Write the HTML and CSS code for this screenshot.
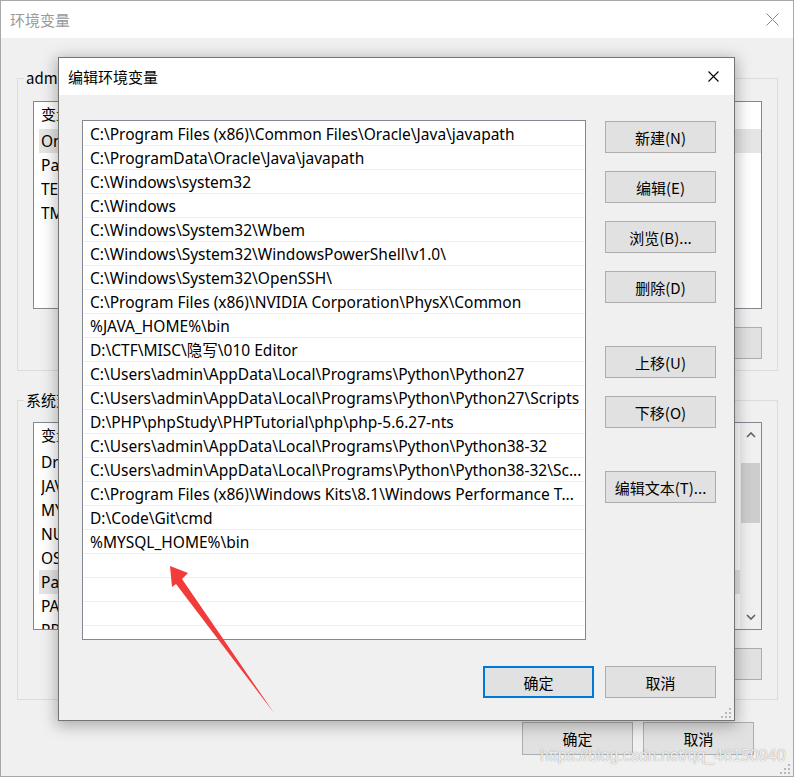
FILE: index.html
```html
<!DOCTYPE html>
<html lang="zh-CN">
<head>
<meta charset="utf-8">
<title>编辑环境变量</title>
<link rel="stylesheet" href="styles.css">
</head>
<body>
<div class="win">
  <div class="win-title">
    <span>环境变量</span>
    <svg class="win-close" viewBox="0 0 13 13"><path d="M0.5 0.5L12.5 12.5M12.5 0.5L0.5 12.5" stroke="#8a8a8a" stroke-width="1" fill="none"/></svg>
  </div>
  <div class="win-body">
    <fieldset class="group g1">
      <legend>admin 的用户变量(U)</legend>
      <div class="vlist">
        <div class="vlist-main">
          <div class="vhead"><span class="c1">变量</span><span class="c2">值</span></div>
          <div class="vrow sel"><span class="c1">OneDrive</span><span class="c2">C:\Users\admin\OneDrive</span></div>
          <div class="vrow"><span class="c1">Path</span><span class="c2">C:\Users\admin\AppData\Local\Microsoft\WindowsApps;</span></div>
          <div class="vrow"><span class="c1">TEMP</span><span class="c2">C:\Users\admin\AppData\Local\Temp</span></div>
          <div class="vrow"><span class="c1">TMP</span><span class="c2">C:\Users\admin\AppData\Local\Temp</span></div>
        </div>
      </div>
      <div class="grp-btns">
        <button class="btn">新建(N)...</button>
        <button class="btn">编辑(E)...</button>
        <button class="btn">删除(D)</button>
      </div>
    </fieldset>
    <fieldset class="group g2">
      <legend>系统变量(S)</legend>
      <div class="vlist">
        <div class="vlist-main">
          <div class="vhead"><span class="c1">变量</span><span class="c2">值</span></div>
          <div class="vrow"><span class="c1">DriverData</span><span class="c2">C:\Windows\System32\Drivers\DriverData</span></div>
          <div class="vrow"><span class="c1">JAVA_HOME</span><span class="c2">C:\Program Files\Java\jdk1.8.0_201</span></div>
          <div class="vrow"><span class="c1">MYSQL_HOME</span><span class="c2">D:\MySQL\mysql-8.0.19-winx64</span></div>
          <div class="vrow"><span class="c1">NUMBER_OF_PROCESSORS</span><span class="c2">8</span></div>
          <div class="vrow"><span class="c1">OS</span><span class="c2">Windows_NT</span></div>
          <div class="vrow sel"><span class="c1">Path</span><span class="c2">C:\Program Files (x86)\Common Files\Oracle\Java\javapath;</span></div>
          <div class="vrow"><span class="c1">PATHEXT</span><span class="c2">.COM;.EXE;.BAT;.CMD;.VBS;.VBE;.JS;.JSE;.WSF;.WSH;.MSC</span></div>
          <div class="vrow"><span class="c1">PROCESSOR_ARCHITECTURE</span><span class="c2">AMD64</span></div>
        </div>
        <div class="vscroll">
          <div class="sb-btn"><svg viewBox="0 0 10 6" class="chev"><path d="M1 5L5 1L9 5" stroke="#606060" stroke-width="1.6" fill="none"/></svg></div>
          <div class="sb-track"><div class="sb-thumb"></div></div>
          <div class="sb-btn"><svg viewBox="0 0 10 6" class="chev"><path d="M1 1L5 5L9 1" stroke="#606060" stroke-width="1.6" fill="none"/></svg></div>
        </div>
      </div>
      <div class="grp-btns">
        <button class="btn">新建(W)...</button>
        <button class="btn">编辑(I)...</button>
        <button class="btn">删除(L)</button>
      </div>
    </fieldset>
    <div class="win-foot">
      <button class="btn btn-foot">确定</button>
      <button class="btn btn-foot">取消</button>
    </div>
  </div>
  <svg class="grip win-grip" viewBox="0 0 10 10"><g fill="#b8b8b8"><rect x="8" y="0" width="2" height="2"/><rect x="4" y="4" width="2" height="2"/><rect x="8" y="4" width="2" height="2"/><rect x="0" y="8" width="2" height="2"/><rect x="4" y="8" width="2" height="2"/><rect x="8" y="8" width="2" height="2"/></g></svg>
</div>

<div class="dlg">
  <div class="dlg-title">
    <span>编辑环境变量</span>
    <svg class="dlg-close" viewBox="0 0 11 11"><path d="M0.5 0.5L10.5 10.5M10.5 0.5L0.5 10.5" stroke="#000" stroke-width="1.1" fill="none"/></svg>
  </div>
  <div class="dlg-body">
    <div class="plist">
      <div class="prow">C:\Program Files (x86)\Common Files\Oracle\Java\javapath</div>
      <div class="prow">C:\ProgramData\Oracle\Java\javapath</div>
      <div class="prow">C:\Windows\system32</div>
      <div class="prow">C:\Windows</div>
      <div class="prow">C:\Windows\System32\Wbem</div>
      <div class="prow">C:\Windows\System32\WindowsPowerShell\v1.0\</div>
      <div class="prow">C:\Windows\System32\OpenSSH\</div>
      <div class="prow">C:\Program Files (x86)\NVIDIA Corporation\PhysX\Common</div>
      <div class="prow">%JAVA_HOME%\bin</div>
      <div class="prow">D:\CTF\MISC\隐写\010 Editor</div>
      <div class="prow">C:\Users\admin\AppData\Local\Programs\Python\Python27</div>
      <div class="prow">C:\Users\admin\AppData\Local\Programs\Python\Python27\Scripts</div>
      <div class="prow">D:\PHP\phpStudy\PHPTutorial\php\php-5.6.27-nts</div>
      <div class="prow">C:\Users\admin\AppData\Local\Programs\Python\Python38-32</div>
      <div class="prow">C:\Users\admin\AppData\Local\Programs\Python\Python38-32\Sc...</div>
      <div class="prow">C:\Program Files (x86)\Windows Kits\8.1\Windows Performance T...</div>
      <div class="prow">D:\Code\Git\cmd</div>
      <div class="prow">%MYSQL_HOME%\bin</div>
      <div class="prow"></div>
      <div class="prow"></div>
      <div class="prow"></div>
      <div class="prow"></div>
      <div class="prow"></div>
    </div>
    <div class="side-btns">
      <button class="btn">新建(N)</button>
      <button class="btn">编辑(E)</button>
      <button class="btn">浏览(B)...</button>
      <button class="btn">删除(D)</button>
      <button class="btn sep">上移(U)</button>
      <button class="btn">下移(O)</button>
      <button class="btn sep">编辑文本(T)...</button>
    </div>
    <div class="dlg-foot">
      <button class="btn btn-default">确定</button>
      <button class="btn">取消</button>
    </div>
  </div>
  <svg class="grip dlg-grip" viewBox="0 0 10 10"><g fill="#b8b8b8"><rect x="8" y="0" width="2" height="2"/><rect x="4" y="4" width="2" height="2"/><rect x="8" y="4" width="2" height="2"/><rect x="0" y="8" width="2" height="2"/><rect x="4" y="8" width="2" height="2"/><rect x="8" y="8" width="2" height="2"/></g></svg>
</div>

<svg class="arrow" viewBox="0 0 794 777" width="794" height="777">
  <polygon points="170,566 188,573 182,579 274,713 176,584 172,587" fill="#f23b3b"/>
</svg>

<div class="watermark">https://blog.csdn.net/qq_46150940</div>
</body>
</html>
```

FILE: styles.css
```css
* { box-sizing: border-box; }

html, body {
  margin: 0;
  padding: 0;
}

body {
  width: 794px;
  height: 777px;
  overflow: hidden;
  position: relative;
  background: #f0f0f0;
  font-family: "Noto Sans", "Noto Sans CJK SC", sans-serif;
  font-size: 15px;
  color: #000;
}

/* ---------- background window ---------- */
.win {
  width: 794px;
  height: 777px;
  border: 1px solid #a8a8a8;
  background: #f0f0f0;
  display: flex;
  flex-direction: column;
  position: relative;
}

.win-title {
  height: 37px;
  flex: none;
  background: #fff;
  display: flex;
  align-items: center;
  justify-content: space-between;
  padding: 0 14px 0 9px;
  color: #9a9a9a;
  font-family: "Noto Sans CJK SC", sans-serif;
}

.win-close { width: 13px; height: 13px; }

.win-body {
  flex: 1;
  padding: 30px 15px 0 16px;
  display: flex;
  flex-direction: column;
}

.group {
  margin: 0;
  border: 1px solid #dcdcdc;
  min-width: 0;
  padding: 13px 15px 11px 15px;
  display: flex;
  flex-direction: column;
}

.group legend {
  padding: 0 2px;
  margin-left: -9px;
  line-height: 20px;
  font-family: "Noto Sans CJK SC", sans-serif;
}

.g2 {
  margin-top: 19px;
  padding-top: 12px;
  padding-bottom: 19px;
}

.vlist {
  height: 208px;
  border: 1px solid #828790;
  background: #fff;
  display: flex;
  overflow: hidden;
}

.vlist-main {
  flex: 1;
  min-width: 0;
  overflow: hidden;
}

.vhead {
  height: 27px;
  line-height: 24px;
  display: flex;
  padding-left: 7px;
  font-family: "Noto Sans CJK SC", sans-serif;
}

.vrow {
  height: 24px;
  line-height: 24px;
  display: flex;
  margin-left: 5px;
  padding-left: 2px;
  white-space: nowrap;
  font-size: 15.5px;
}

.vrow.sel { background: #e5e5e5; }

.c1 { width: 212px; flex: none; overflow: hidden; }
.vhead .c1 { width: 214px; }
.c2 { flex: 1; overflow: hidden; }

.vscroll {
  width: 21px;
  flex: none;
  background: #f0f0f0;
  display: flex;
  flex-direction: column;
  border-left: 1px solid #f0f0f0;
}

.sb-btn {
  height: 24px;
  display: flex;
  align-items: center;
  justify-content: center;
}

.chev { width: 10px; height: 6px; }

.sb-track {
  flex: 1;
  padding-top: 16px;
}

.sb-thumb {
  height: 60px;
  background: #cdcdcd;
  margin-right: 1px;
}

.grp-btns {
  display: flex;
  justify-content: flex-end;
  gap: 12px;
  margin-top: 18px;
}

.btn {
  width: 111px;
  height: 32px;
  padding: 0;
  background: #e1e1e1;
  border: 1px solid #adadad;
  font-family: "Noto Sans CJK SC", sans-serif;
  font-size: 15px;
  color: #000;
  border-radius: 0;
}

.win-foot {
  display: flex;
  justify-content: flex-end;
  gap: 10px;
  margin-top: 22px;
  padding-right: 24px;
}

.btn-foot { height: 33px; }

.grip {
  position: absolute;
  width: 10px;
  height: 10px;
}

.win-grip { right: 3px; bottom: 2px; }

/* ---------- dialog ---------- */
.dlg {
  position: absolute;
  left: 58px;
  top: 57px;
  width: 677px;
  height: 664px;
  border: 1px solid #747474;
  background: #f0f0f0;
  box-shadow: 0 3px 14px 2px rgba(0, 0, 0, 0.28);
  display: flex;
  flex-direction: column;
}

.dlg-title {
  height: 37px;
  flex: none;
  background: #fff;
  display: flex;
  align-items: center;
  justify-content: space-between;
  padding: 0 15px 1px 9px;
  font-family: "Noto Sans CJK SC", sans-serif;
}

.dlg-close { width: 11px; height: 11px; }

.dlg-body {
  flex: 1;
  display: grid;
  grid-template-columns: 504px 111px;
  grid-template-rows: 520px 32px;
  column-gap: 19px;
  row-gap: 26px;
  padding: 25px 18px 22px 23px;
}

.plist {
  border: 1px solid #828790;
  background: #fff;
  padding-top: 1px;
  overflow: hidden;
}

.prow {
  height: 24px;
  line-height: 24px;
  border-bottom: 1px solid #efefef;
  padding-left: 7px;
  white-space: nowrap;
  overflow: hidden;
  font-size: 15.5px;
}

.side-btns {
  display: flex;
  flex-direction: column;
  gap: 18px;
  padding-top: 1px;
}

.side-btns .btn { flex: none; }
.side-btns .sep { margin-top: 25px; }

.dlg-foot {
  grid-column: 1 / -1;
  display: flex;
  justify-content: flex-end;
  gap: 11px;
}

.btn-default {
  border: 2px solid #0078d7;
}

.dlg-grip { right: 3px; bottom: 2px; }

/* ---------- overlays ---------- */
.arrow {
  position: absolute;
  left: 0;
  top: 0;
  pointer-events: none;
}

.watermark {
  position: absolute;
  left: 540px;
  top: 747px;
  font-family: "Liberation Sans", sans-serif;
  font-size: 16px;
  color: rgba(255, 255, 255, 0.85);
  text-shadow: 0 0 1px rgba(120, 120, 120, 0.9);
  white-space: nowrap;
}
```
